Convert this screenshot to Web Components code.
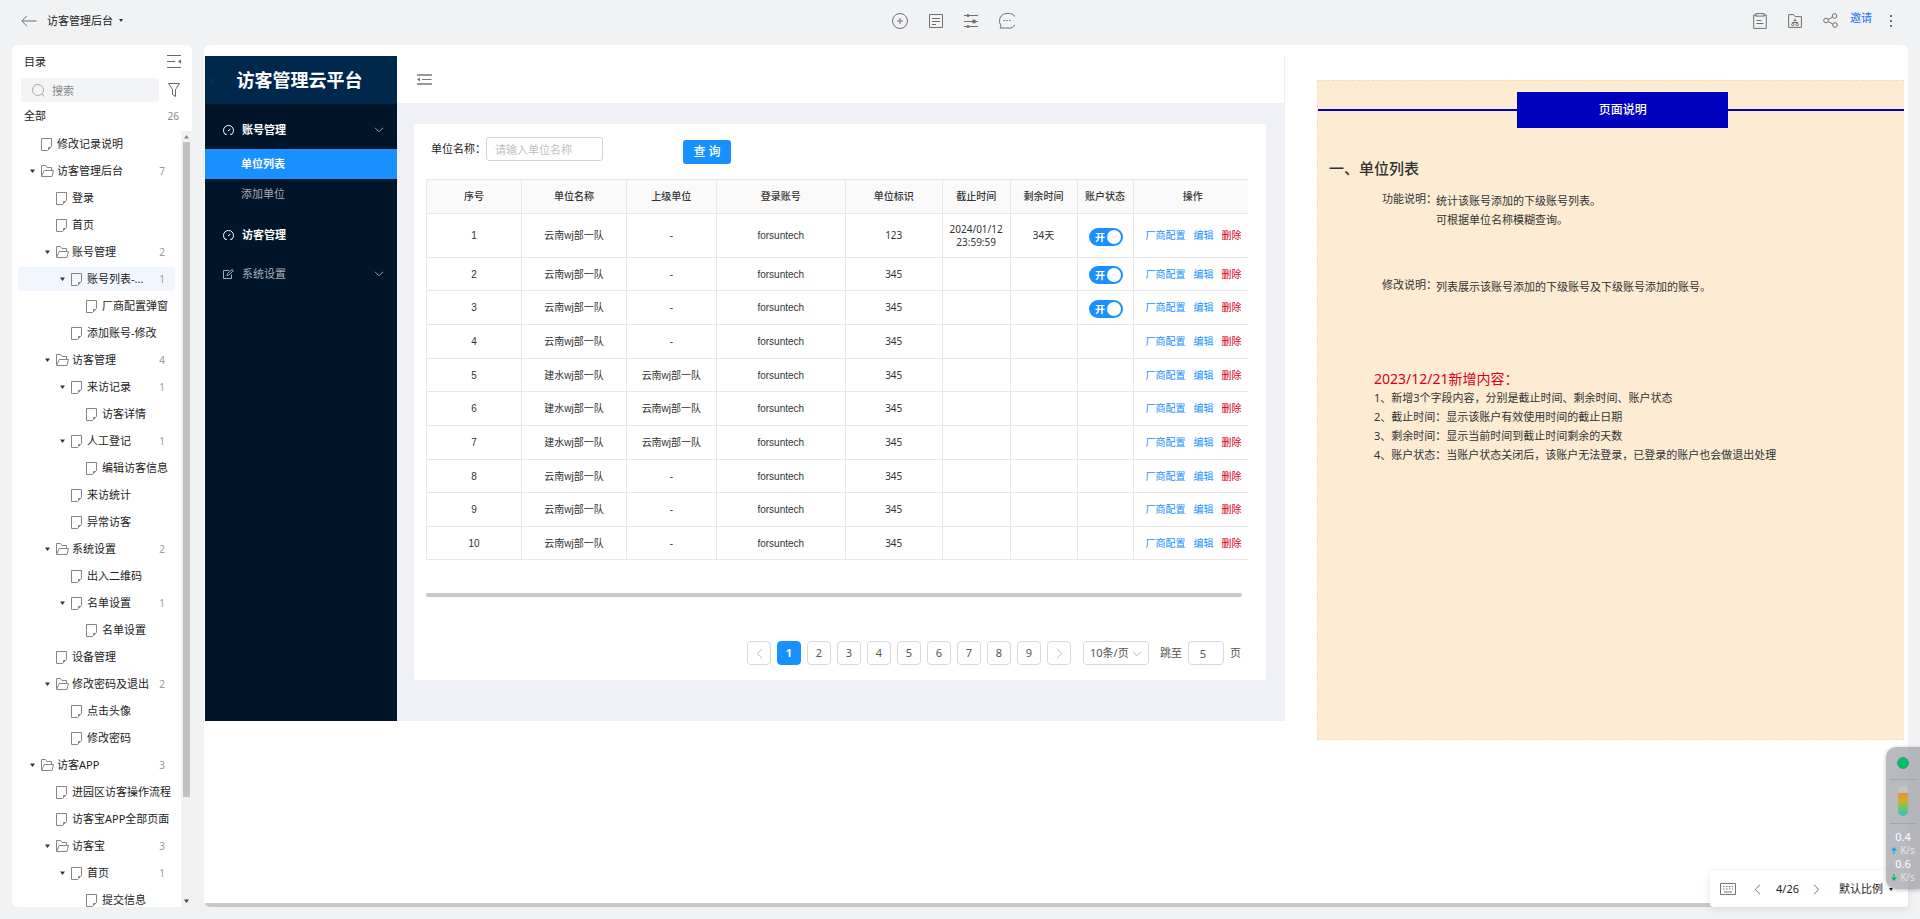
<!DOCTYPE html>
<html lang="zh-CN">
<head>
<meta charset="utf-8">
<title>访客管理后台</title>
<style>
html,body{height:100%}
body{margin:0;background:#f1f2f4;color:#222;font:11px/16px "Noto Sans","Noto Sans CJK SC",sans-serif;overflow:hidden}
</style>
</head>
<body>
<proto-app></proto-app>
<script>
const BASE=`<style>
*{box-sizing:border-box}
a{color:inherit;text-decoration:none}
button{font:inherit;color:inherit;background:none;border:0;padding:0;margin:0;cursor:pointer}
input,select{font:inherit;color:inherit;margin:0}
svg{display:block;fill:none;stroke:currentColor}
</style>`;
function define(name,html,setup){
  customElements.define(name,class extends HTMLElement{
    connectedCallback(){
      if(this.shadowRoot)return;
      const t=document.createElement('template');
      t.innerHTML=BASE+(typeof html==='function'?html(this):html);
      this.attachShadow({mode:'open'}).append(t.content.cloneNode(true));
      if(setup)setup(this);
    }
  });
}

/* Icons: name -> [width, height, markup] */
const ICONS={
  back:[16,12,'<path d="M15.5 6H1M6 .8 .8 6 6 11.2"/>'],
  caret:[5,4,'<path d="M0 .5h5L2.500 4z" fill="currentColor" stroke="none"/>'],
  dot:[4,3,'<path d="M0 0h4L2 3z" fill="currentColor" stroke="none"/>'],
  plus:[16,16,'<circle cx="8" cy="8" r="7.500"/><path d="M8 5v6M5 8h6"/>'],
  note:[14,14,'<path d="M.5.5h13v13H.5zM3 4.500h8M3 7.500h8M3 10.500h4"/>'],
  sliders:[14,14,'<path d="M0 1.500h14M0 7.500h14M0 12.500h14"/><g fill="currentColor" stroke="none"><circle cx="4" cy="1.500" r="1.500"/><circle cx="10" cy="7.500" r="2"/><circle cx="4" cy="12.500" r="1.500"/></g>'],
  chat:[16,16,'<path d="M8 .5a7.500 7.500 0 1 1 0 14.500H1l1-2.300A7.500 7.500 0 0 1 8 .5z"/><path d="M4.500 7.500h1.500M7.300 7.500h1.500M10.200 7.500h1.500"/>'],
  clip:[14,16,'<path d="M3 2H.7v13.400h12.600V2H11"/><rect x="3" y=".6" width="8" height="2.500"/><path d="M3.500 7.500h5M3.500 10.500h7"/>'],
  pack:[14,14,'<path d="M.6 13.400V.6h5l1.400 2h6.400v10.800z"/><path d="M7 4.500v3M4 8.500h6M5.500 6.500h3"/><circle cx="4.800" cy="10.500" r="1.200"/><circle cx="9.200" cy="10.500" r="1.200"/>'],
  share:[15,15,'<circle cx="3" cy="7.500" r="2.300"/><circle cx="11.500" cy="3" r="2.300"/><circle cx="12" cy="12" r="2.300"/><path d="M5 6.600 9.400 4.200M5.200 8.500 9.800 11"/>'],
  more:[2,12,'<path d="M0 1h2M0 6h2M0 11h2" stroke-width="2"/>'],
  fold:[14,13,'<path d="M0 .5h14M0 6.500h8M0 12.500h14"/><path d="M14 4.500v4l-3-2z" fill="currentColor" stroke="none"/>'],
  search:[13,13,'<circle cx="6" cy="6" r="5.500"/><path d="m10 10 2.500 2.500"/>'],
  filter:[12,15,'<path d="M.5.5h11L7.500 6.500v7l-3-2v-5z"/>'],
  file:[11,13,'<path d="M.5.5h10v8l-4 4h-6z"/><path d="M10 9.500H7.500V12"/>'],
  folder:[13,12,'<path d="M.5 11V.5h4l1.500 2h4.500v2.500"/><path d="M.5 11.500 3.200 5.500h9.300l-1.500 6z"/>'],
  gauge:[11,10,'<path d="M2.300 9.300a5 5 0 1 1 6.400 0M5 6l2.500-2"/><path d="M1.800 9.300h2M7.200 9.300h2"/>'],
  edit:[11,10,'<path d="M6 1.500H.5v8h8V5.500M4 6.500l.3-1.800L9 .5l1.300 1.200-4.600 4.500z"/>'],
  down:[10,6,'<path d="M1 .8 5 4.800 9 .8"/>'],
  menu:[15,11,'<path d="M0 1h15M0 10h15" stroke-width="1.500"/><path d="M5 5.500h9.500"/><path d="M3 3.500v4l-3-2z" fill="currentColor" stroke="none"/>'],
  left:[7,11,'<path d="M6 .8 1.200 5.500 6 10.200"/>'],
  right:[7,11,'<path d="M1 .8 5.800 5.500 1 10.200"/>'],
  keys:[16,12,'<path d="M.5.5h15v11H.5z"/><path d="M3 3.500h10M3 6h10" stroke-width="1.200" stroke-dasharray="1.500 1.500"/><path d="M4 9h8"/>'],
  up:[6,7,'<path d="M3 7V1" stroke-width="1.200"/><path d="M0 3.500h6L3 0z" fill="currentColor" stroke="none"/>'],
  dn:[6,7,'<path d="M3 0v6" stroke-width="1.200"/><path d="M0 3.500h6L3 7z" fill="currentColor" stroke="none"/>']
};
define('ui-icon',el=>{
  const [w,h,m]=ICONS[el.getAttribute('name')];
  return `<style>:host{display:block;flex:none}</style><svg width="${w}" height="${h}" viewBox="0 0 ${w} ${h}" aria-hidden="true">${m}</svg>`;
});

define('top-bar',`<style>
:host{display:grid;grid-template-columns:1fr auto 1fr;align-items:center;height:45px;padding:0 28px 4px 21px;color:#707070}
div{display:flex;align-items:center}
.l{gap:10px}.l a{color:#222}.l button:last-child{margin-left:-4px;color:#333}
.m{gap:21px;margin-right:6px}
.r{justify-content:flex-end;gap:21px}
.invite{color:#1a6dff;margin:0 0 6px -9px}
.more{margin-left:-3px}
</style>
<div class="l"><button aria-label="返回"><ui-icon name="back"></ui-icon></button><a href="#">访客管理后台</a><button aria-label="展开"><ui-icon name="dot"></ui-icon></button></div>
<div class="m"><button aria-label="添加"><ui-icon name="plus"></ui-icon></button><button aria-label="说明"><ui-icon name="note"></ui-icon></button><button aria-label="设置"><ui-icon name="sliders"></ui-icon></button><button aria-label="评论"><ui-icon name="chat"></ui-icon></button></div>
<div class="r"><button aria-label="任务"><ui-icon name="clip"></ui-icon></button><button aria-label="素材"><ui-icon name="pack"></ui-icon></button><button aria-label="分享"><ui-icon name="share"></ui-icon></button><button class="invite">邀请</button><button class="more" aria-label="更多"><ui-icon name="more"></ui-icon></button></div>`);

/* level, kind, label, count, expanded, selected */
const TREE=[
[0,'file','修改记录说明'],[0,'folder','访客管理后台',7,1],[1,'file','登录'],[1,'file','首页'],
[1,'folder','账号管理',2,1],[2,'file','账号列表-...',1,1,1],[3,'file','厂商配置弹窗'],[2,'file','添加账号-修改'],
[1,'folder','访客管理',4,1],[2,'file','来访记录',1,1],[3,'file','访客详情'],[2,'file','人工登记',1,1],
[3,'file','编辑访客信息'],[2,'file','来访统计'],[2,'file','异常访客'],[1,'folder','系统设置',2,1],
[2,'file','出入二维码'],[2,'file','名单设置',1,1],[3,'file','名单设置'],[1,'file','设备管理'],
[1,'folder','修改密码及退出',2,1],[2,'file','点击头像'],[2,'file','修改密码'],[0,'folder','访客APP',3,1],
[1,'file','进园区访客操作流程'],[1,'file','访客宝APP全部页面'],[1,'folder','访客宝',3,1],[2,'file','首页',1,1],[3,'file','提交信息']];
define('tree-item',el=>{
  const g=n=>el.getAttribute(n);
  return `<style>
:host{display:block;padding:1px 6px 2px}
a{display:flex;align-items:center;height:24px;padding:0 10px 0 ${12+15*g('level')}px;border-radius:3px;color:#222;white-space:nowrap}
:host([selected]) a{background:#f2f7ff}
.c{flex:none;width:11px;color:#333}
.i{flex:none;width:16px;color:#858585}
b{margin-left:auto;font-weight:400;color:#999;font-size:10px}
</style><a href="#"><span class="c">${g('open')!==null?'<ui-icon name="caret"></ui-icon>':''}</span><span class="i"><ui-icon name="${g('kind')}"></ui-icon></span>${g('label')}${g('count')?`<b>${g('count')}</b>`:''}</a>`;
});
define('side-tree',`<style>
:host{display:flex;flex-direction:column;background:#fff;border-radius:6px;overflow:hidden;min-height:0}
header{display:flex;justify-content:space-between;align-items:center;height:33px;padding:0 11px 0 12px}
header button,.find button{color:#666}
.find{display:flex;align-items:center;justify-content:space-between;padding:0 12px 0 9px;height:24px}
label{display:flex;align-items:center;gap:7px;width:138px;height:24px;padding-left:11px;background:#f3f4f5;border-radius:3px;color:#aaa}
input{border:0;background:none;padding:0;width:90px;outline:0;height:22px}
input::placeholder{color:#888;opacity:1}
.all{display:flex;justify-content:space-between;align-items:center;height:29px;padding:0 13px 2px 12px}
.all span{color:#888;font-size:10px}
.body{display:flex;flex:1;min-height:0}
nav{flex:1;min-width:0;overflow:hidden}
.bar{display:flex;flex-direction:column;align-items:center;width:11px;background:#f1f1f1;padding:4px 0;color:#888}
.bar i{width:7px;height:655px;max-height:86%;background:#c1c1c1;margin-top:3px}
.bar .u{transform:rotate(180deg)}
.bar .d{margin-top:auto;color:#444}
</style>
<header><span>目录</span><button aria-label="收起目录"><ui-icon name="fold"></ui-icon></button></header>
<div class="find"><label><ui-icon name="search"></ui-icon><input type="text" placeholder="搜索" aria-label="搜索"></label><button aria-label="筛选"><ui-icon name="filter"></ui-icon></button></div>
<div class="all">全部<span>26</span></div>
<div class="body"><nav>${TREE.map(([l,k,t,c,o,s])=>`<tree-item level="${l}" kind="${k}" label="${t}"${c?` count="${c}"`:''}${o?' open':''}${s?' selected':''}></tree-item>`).join('')}</nav>
<div class="bar"><ui-icon class="u" name="caret"></ui-icon><i></i><ui-icon class="d" name="caret"></ui-icon></div></div>`);

define('admin-menu',`<style>
:host{display:block;background:#001529;color:#fff;font-weight:700}
h1{display:flex;align-items:center;height:48px;margin:0;background:#00284d;font-size:18px;line-height:24px;text-align:center}
h1 small{width:12px;font-size:10px;font-weight:400;color:#2b2b2b;line-height:16px;margin-left:1px}
h1 span{flex:1;margin-right:16px}
a{display:flex;align-items:center;height:38px;padding:0 13px 0 18px;gap:8px}
a ui-icon:last-child{margin-left:auto;color:#9aa3ab}
section{padding-top:7px}
.sub{height:30px;padding-left:36px}
.on{background:#1890ff}
.dim{color:#a6adb4;font-weight:400}
.last{margin-top:1px}
</style>
<h1><small>z</small><span>访客管理云平台</span></h1>
<nav><section><a href="#"><ui-icon name="gauge"></ui-icon>账号管理<ui-icon name="down"></ui-icon></a><a class="sub on" href="#">单位列表</a><a class="sub dim" href="#">添加单位</a></section>
<section><a href="#"><ui-icon name="gauge"></ui-icon><span>访客管理</span></a><a class="dim last" href="#"><ui-icon name="edit"></ui-icon>系统设置<ui-icon name="down"></ui-icon></a></section></nav>`);

define('on-switch',`<style>
:host{display:flex;justify-content:center}
label{display:flex;align-items:center;justify-content:space-between;width:34px;height:18px;padding:0 2px 0 6px;border-radius:9px;background:#1890ff;color:#fff;font:700 10px/16px "Noto Sans CJK SC",sans-serif}
input{appearance:none;width:14px;height:14px;border-radius:7px;background:#fff}
</style><label>开<input type="checkbox" role="switch" checked></label>`);

const A='云南wj部一队',B='建水wj部一队';
const ROWS=[[A,'-','123','2024/01/12 23:59:59','34天',1],[A,'-','345','','',1],[A,'-','345','','',1],[A,'-','345','','',0],
[B,A,'345','','',0],[B,A,'345','','',0],[B,A,'345','','',0],[A,'-','345','','',0],[A,'-','345','','',0],[A,'-','345','','',0]];
define('unit-table',`<style>
:host{display:block}
table{width:100%;table-layout:fixed;border-collapse:collapse;font-size:10px;line-height:13px;color:#333}
th,td{border:1px solid #e8e8e8;padding:0 4px;text-align:center;height:34px}
th{background:#fafafa;color:#333;font-weight:500}
th:last-child,td:last-child{border-right:0}
th:last-child{padding-left:8px}
tbody tr:first-child td{height:44px}
tbody tr:nth-child(3n+2) td,tbody tr:last-child td{height:33px}
td:nth-child(-n+4){font-family:"Liberation Sans","Noto Sans CJK SC",sans-serif}
td:last-child{padding:0 7px 0 12px}
td:nth-child(8){padding:2px 0 0 2px}
div{display:flex;gap:8px;color:#1890ff;white-space:nowrap}
.del{color:#d9001b}
</style>
<table><colgroup>${[95,105,90,129,97,68,67,56,115].map(w=>`<col style="width:${(w/8.22).toFixed(2)}%">`).join('')}</colgroup>
<thead><tr>${['序号','单位名称','上级单位','登录账号','单位标识','截止时间','剩余时间','账户状态','操作'].map(t=>`<th>${t}</th>`).join('')}</tr></thead>
<tbody>${ROWS.map((r,i)=>`<tr><td>${i+1}</td><td>${r[0]}</td><td>${r[1]}</td><td>forsuntech</td><td>${r[2]}</td><td>${r[3]}</td><td>${r[4]}</td><td>${r[5]?'<on-switch></on-switch>':''}</td><td><div><a href="#">厂商配置</a><a href="#">编辑</a><a class="del" href="#">删除</a></div></td></tr>`).join('')}</tbody></table>`);

define('page-nav',`<style>
:host{display:flex;justify-content:flex-end;gap:6px;color:#555}
button,input,.sel{display:flex;align-items:center;justify-content:center;height:24px;border:1px solid #d9d9d9;border-radius:4px;background:#fff}
button{width:24px}
button ui-icon{color:#bbb}
.on{background:#1890ff;border-color:#1890ff;color:#fff;font-weight:700}
.sel{position:relative;margin:0 5px 0 6px;width:66px}
select{appearance:none;width:64px;height:22px;border:0;background:none;padding:0 0 0 6px;outline:0}
.sel ui-icon{position:absolute;right:6px;top:9px;color:#bbb;pointer-events:none}
label{display:flex;align-items:center;gap:6px}
input{width:36px;text-align:center;padding:0 6px 0 0}
</style>
<button aria-label="上一页"><ui-icon name="left"></ui-icon></button>${[1,2,3,4,5,6,7,8,9].map(n=>`<button${n===1?' class="on"':''}>${n}</button>`).join('')}<button aria-label="下一页"><ui-icon name="right"></ui-icon></button>
<span class="sel"><select aria-label="每页条数"><option>10条/页</option></select><ui-icon name="down"></ui-icon></span>
<label>跳至<input type="text" value="5">页</label>`);

define('admin-frame',`<style>
:host{display:grid;grid-template-columns:192px minmax(0,1fr);background:#f0f1f6}
.top{display:flex;align-items:center;height:47px;padding-left:20px;background:#fff;border-right:1px solid #eee;color:#777}
main{margin:21px 19px 41px 17px;padding:13px 18px 15px 12px;background:#fff;border-radius:3px}
form{display:flex;align-items:center;height:42px;padding:0 0 18px 5px}
form label{color:#222}
form input{width:117px;height:24px;border:1px solid #d4d4d4;border-radius:3px;padding:0 8px;background:#fff}
form input::placeholder{color:#bfbfbf;opacity:1}
form button{width:48px;height:24px;margin:6px 0 0 80px;border-radius:3px;background:#1890ff;color:#fff;font-size:12px;font-weight:500}
hr{height:4px;margin:33px 6px 44px 0;border:0;border-radius:2px;background:#c9c9c9}
page-nav{margin-right:7px}
</style>
<admin-menu></admin-menu>
<div><div class="top"><button aria-label="折叠菜单"><ui-icon name="menu"></ui-icon></button></div>
<main><form><label for="unit">单位名称：</label><input id="unit" type="text" placeholder="请输入单位名称"><button type="button">查 询</button></form>
<unit-table></unit-table><hr><page-nav></page-nav></main></div>`);

define('note-row',`<style>:host{display:grid;grid-template-columns:54px 1fr;height:86px;line-height:19px;padding-left:64px}
span{white-space:nowrap}
div{padding-top:2px}</style><span><slot name="label"></slot></span><div><slot></slot></div>`);
define('page-notes',`<style>
:host{display:block;background:#fdebd3;border:1px dashed #fbdcae;border-right:0;color:#333}
.head{display:flex;align-items:center;margin-top:11px}
.head i{height:2px;background:#0000bf}
.head i:first-child{flex:0 0 34%}
.head i:last-child{flex:1}
h2{flex:0 0 36%;height:36px;margin:0;background:#0000bf;color:#fff;font-size:12px;line-height:36px;font-weight:500;text-align:center}
h3{margin:30px 0 11px 11px;font-size:15px;line-height:20px;font-weight:500}
.new{margin:8px 0 0 56px;line-height:19px}
h4{margin:0;font-size:14px;line-height:19px;font-weight:400;color:#d9001b}
p{margin:0}
</style>
<div class="head"><i></i><h2>页面说明</h2><i></i></div>
<h3>一、单位列表</h3>
<note-row><span slot="label">功能说明：</span>统计该账号添加的下级账号列表。<br>可根据单位名称模糊查询。</note-row>
<note-row><span slot="label">修改说明：</span>列表展示该账号添加的下级账号及下级账号添加的账号。</note-row>
<div class="new"><h4>2023/12/21新增内容：</h4>
<p>1、新增3个字段内容，分别是截止时间、剩余时间、账户状态</p><p>2、截止时间：显示该账户有效使用时间的截止日期</p><p>3、剩余时间：显示当前时间到截止时间剩余的天数</p><p>4、账户状态：当账户状态关闭后，该账户无法登录，已登录的账户也会做退出处理</p></div>`);

define('zoom-bar',`<style>
:host{display:flex;align-items:center;height:36px;width:198px;padding:0 15px 0 10px;background:#fff;border-radius:3px;box-shadow:0 2px 10px rgba(0,0,0,.1);color:#222}
ui-icon{color:#777}
.p{margin:0 15px 0 18px}
.n{margin:0 auto 0 14px}
.s{display:flex;align-items:center;gap:6px}
.s ui-icon{color:#222}
</style><button aria-label="快捷键"><ui-icon name="keys"></ui-icon></button><button class="p" aria-label="上一个"><ui-icon name="left"></ui-icon></button>4/26<button class="n" aria-label="下一个"><ui-icon name="right"></ui-icon></button><button class="s">默认比例<ui-icon name="dot"></ui-icon></button>`);

define('net-widget',`<style>
:host{display:flex;flex-direction:column;align-items:center;width:34px;height:142px;padding:10px 0 0;border-radius:10px 0 0 10px;background:rgba(152,154,160,.68);box-shadow:0 1px 4px rgba(0,0,0,.25);color:#fff;line-height:12px}
.dot{width:12px;height:12px;border-radius:6px;background:#00bf63;border:1px solid #3a9a9a}
hr{width:26px;height:1px;border:0;background:#a2a4a8;margin:10px 0 6px}
.g{width:10px;height:30px;border-radius:5px;background:linear-gradient(#c3c4c8 7px,#ee8e34 7px,#d4b020 15px,#5cc87c 23px,#35c0c0)}
.g+hr{margin:7px 0 7px}
span{display:flex;align-items:center;gap:3px;font-size:10px;line-height:15px;color:#e4e5e7}
.u{color:#10a5ff}.d{color:#00bf63}
</style><div class="dot"></div><hr><div class="g"></div><hr>0.4<span><ui-icon class="u" name="up"></ui-icon>K/s</span>0.6<span><ui-icon class="d" name="dn"></ui-icon>K/s</span>`);

define('proto-app',`<style>
:host{display:flex;flex-direction:column;height:100vh;min-height:600px}
.work{display:grid;grid-template-columns:180px minmax(0,1fr);gap:12px;flex:1;min-height:0;padding:0 12px}
side-tree,.view{margin-bottom:12px}
.view{position:relative;display:flex;flex-direction:column;background:#fff;border-radius:6px;min-height:0;overflow:hidden}
.canvas{flex:1;min-height:0;display:grid;grid-template-columns:1080fr 587fr;gap:32px;align-items:start;padding:11px 4px 0 1px;overflow:hidden}
page-notes{margin-top:24px;min-height:660px}
.scroll{height:4px;background:#c9c9c9;margin-left:1px}
zoom-bar{position:absolute;right:12px;bottom:12px}
net-widget{position:absolute;right:0;bottom:30px}
</style>
<top-bar></top-bar>
<div class="work"><side-tree></side-tree><div class="view"><div class="canvas"><admin-frame></admin-frame><page-notes></page-notes></div><div class="scroll"></div></div></div>
<zoom-bar></zoom-bar><net-widget></net-widget>`);
</script>
</body>
</html>
